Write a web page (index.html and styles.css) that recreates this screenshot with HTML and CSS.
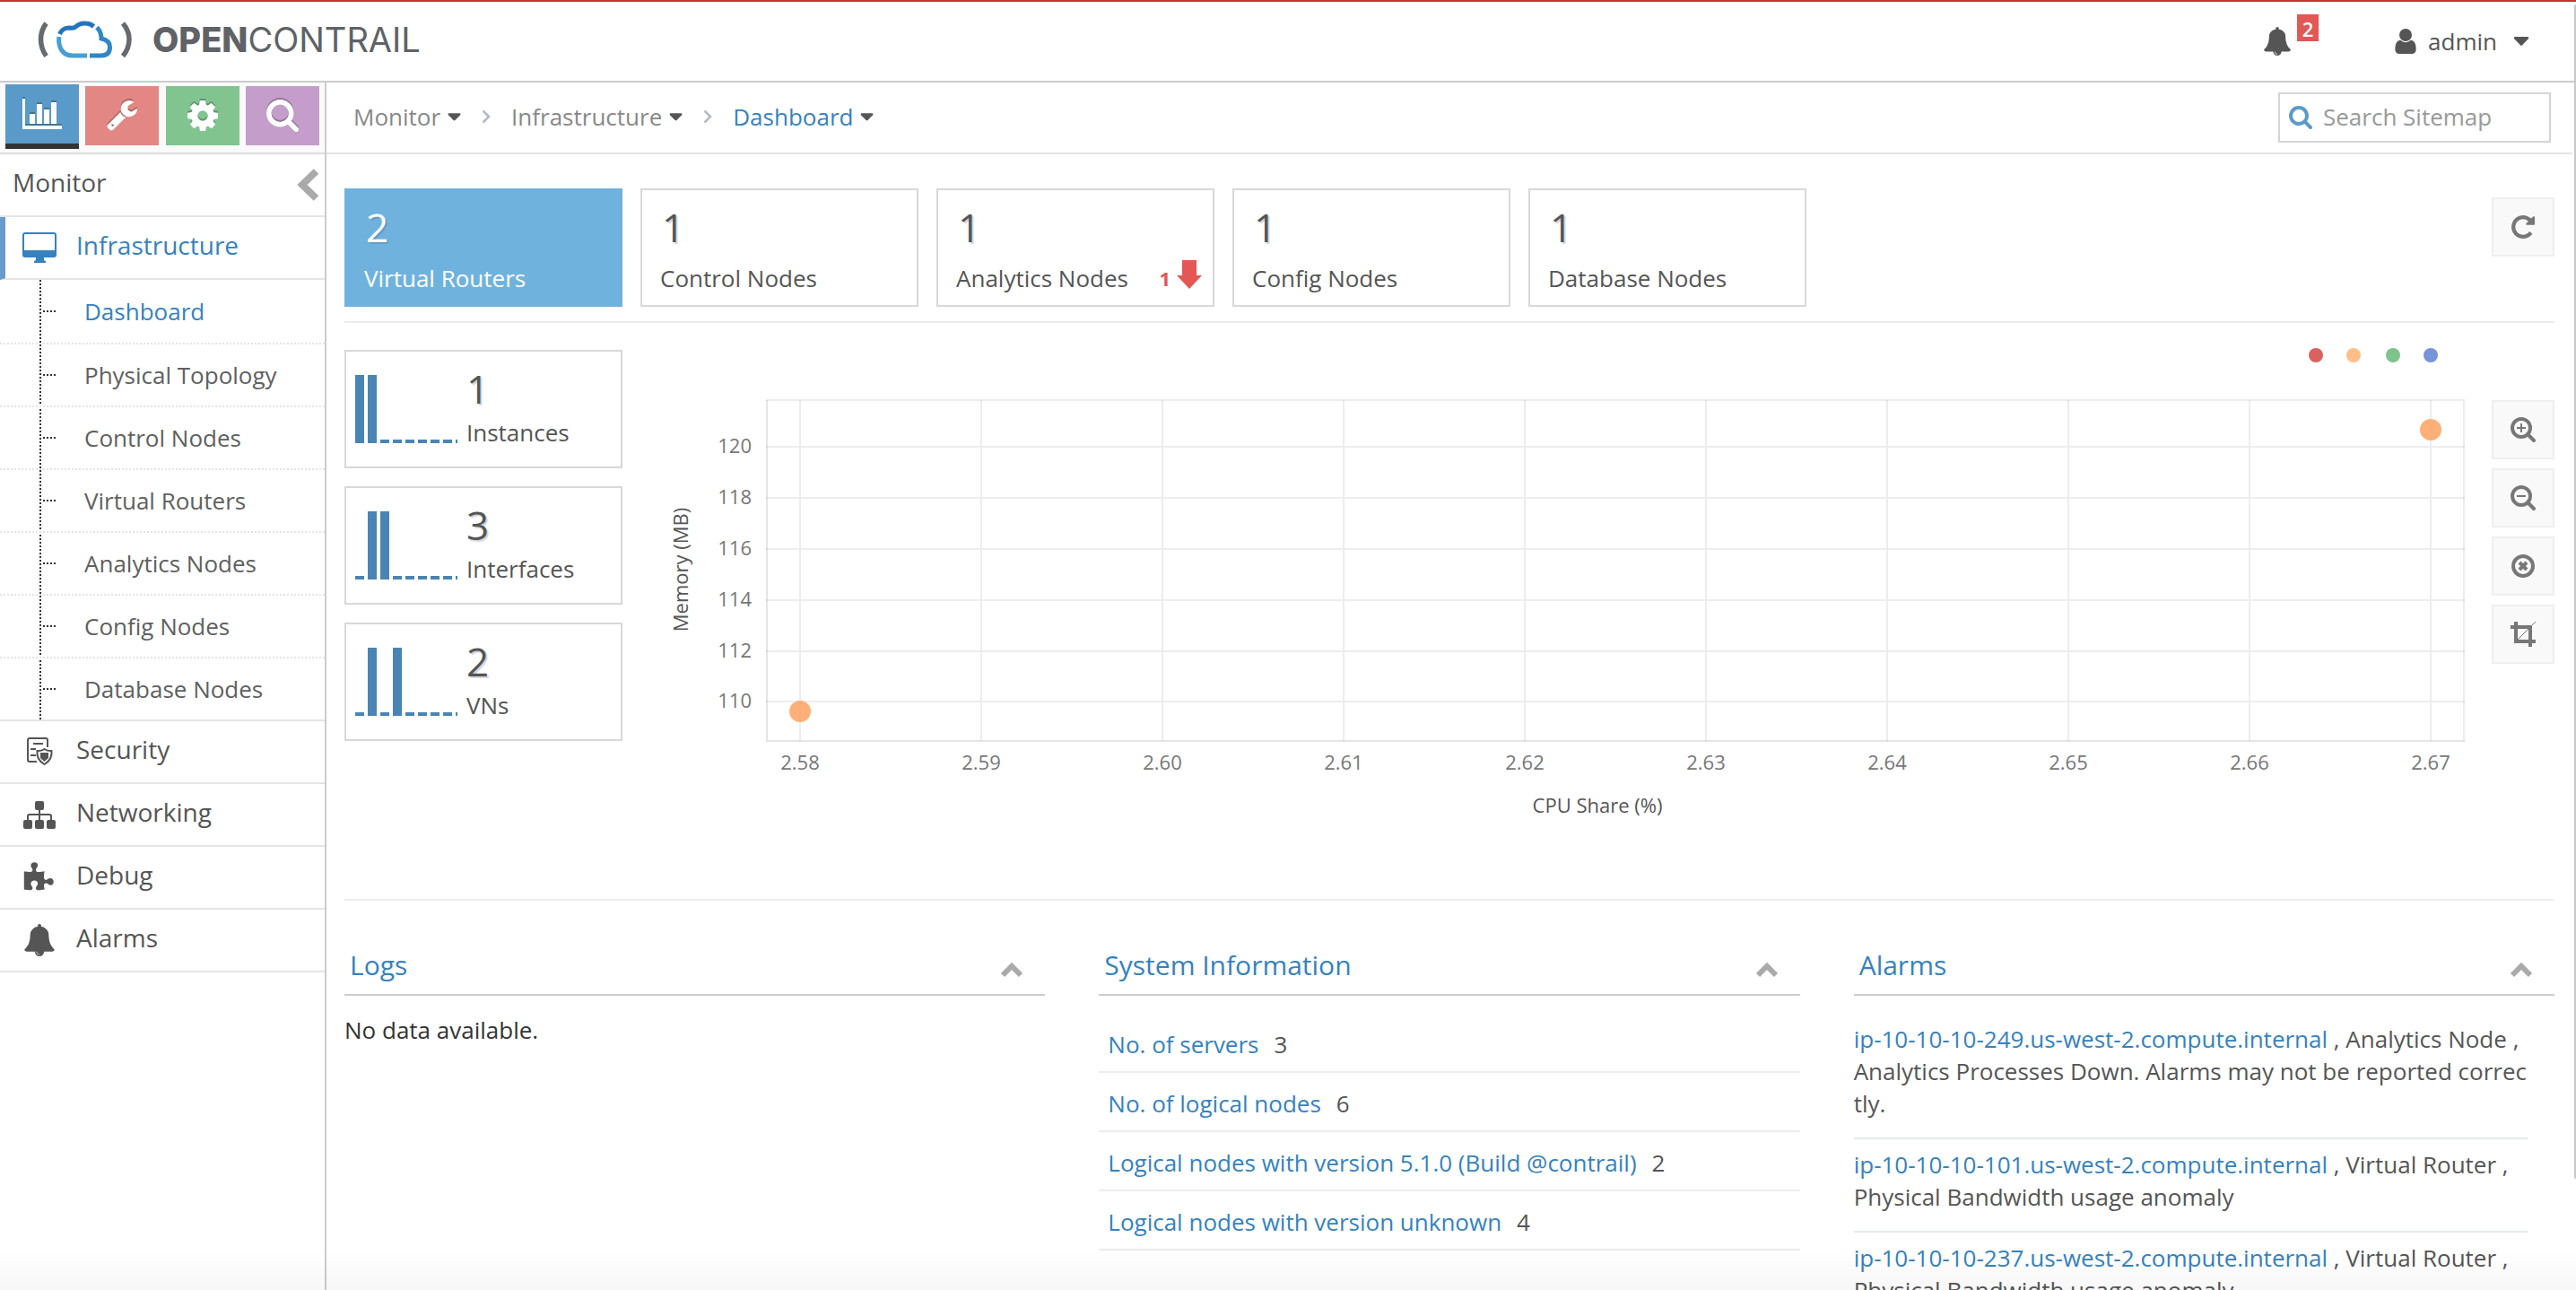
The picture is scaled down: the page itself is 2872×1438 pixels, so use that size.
FILE: index.html
```html
<!DOCTYPE html>
<html lang="en">
<head>
<meta charset="utf-8">
<title>OpenContrail - Dashboard</title>
<link rel="stylesheet" href="styles.css">
</head>
<body>
<svg class="sprite" aria-hidden="true">
  <symbol id="caret" viewBox="0 0 16 9"><path d="M1.500 0h13q1.500 0.500 0.500 2L9 8.300q-1 0.900-2 0L1 2q-1-1.500 0.500-2z"/></symbol>
  <symbol id="next" viewBox="0 0 10 16"><path d="M1.500 1.500 8 8l-6.500 6.500" fill="none" stroke="currentColor" stroke-width="2.500"/></symbol>
  <symbol id="chevron-up" viewBox="0 0 26 18"><path d="M3 15 13 5l10 10" fill="none" stroke="currentColor" stroke-width="6"/></symbol>
  <symbol id="bell" viewBox="0 0 1792 1792"><path d="M912 1696q0-16-16-16-59 0-101.500-42.500t-42.500-101.500q0-16-16-16t-16 16q0 73 51.500 124.500t124.500 51.500q16 0 16-16zm816-288q0 52-38 90t-90 38h-448q0 106-75 181t-181 75-181-75-75-181h-448q-52 0-90-38t-38-90q50-42 91-88t85-119.500 74.500-158.500 50-206 19.500-260q0-152 117-282.500t307-158.500q-8-19-8-39 0-40 28-68t68-28 68 28 28 68q0 20-8 39 190 28 307 158.500t117 282.500q0 139 19.500 260t50 206 74.500 158.500 85 119.500 91 88z"/></symbol>
  <symbol id="search" viewBox="64 128 1664 1664"><path d="M1216 832q0-185-131.500-316.500t-316.500-131.500-316.500 131.500-131.500 316.500 131.500 316.500 316.500 131.500 316.500-131.500 131.500-316.500zm512 832q0 52-38 90t-90 38q-54 0-90-38l-343-342q-179 124-399 124-143 0-273.500-55.500t-225-150-150-225-55.500-273.500 55.500-273.500 150-225 225-150 273.500-55.500 273.500 55.500 225 150 150 225 55.500 273.500q0 220-124 399l343 343q37 37 37 90z"/></symbol>
</svg>

<header class="topbar">
  <a class="brand" href="#">
    <svg class="brand-mark" viewBox="40 20 110 46" aria-hidden="true">
      <g fill="none" stroke="#666a6e" stroke-width="5.500">
        <path d="M51.500 25q-6 8-6 18t6 18.500"/><path d="M137 25q7 8 7 18t-7 18.500"/>
      </g>
      <g fill="none" stroke-width="5">
        <path stroke="#2474bd" d="M66.500 37q3-7 11-7 4 0.500 6-0.500 5-5 12-4.500 5 0 9 3.500"/>
        <path stroke="#2f86c8" d="M108 29.500q5 5 5 12.500 9.500 2 9.500 9.500 0 9.500-10 9.500H100"/>
        <path stroke="#449fd3" d="M65.800 40q-1 9 3 15 4 6 12 6H97"/>
      </g>
    </svg>
    <span class="brand-name"><b>OPEN</b>CONTRAIL</span>
  </a>
  <button class="alerts" type="button" aria-label="Alerts">
    <svg class="icon-bell"><use href="#bell"/></svg>
    <span class="badge">2</span>
  </button>
  <button class="account" type="button">
    <svg class="icon-user" viewBox="256 128 1280 1536"><path d="M1536 1399q0 109-62.500 187t-150.500 78h-854q-88 0-150.500-78t-62.500-187q0-85 8.500-160.500t31.500-152 58.500-131 94-89 134.500-34.500q131 128 313 128t313-128q76 0 134.500 34.500t94 89 58.500 131 31.500 152 8.500 160.500zm-256-887q0 159-112.500 271.500t-271.500 112.500-271.500-112.500-112.500-271.500 112.500-271.500 271.500-112.500 271.500 112.500 112.500 271.500z"/></svg>
    <span>admin</span>
    <svg class="icon-caret-lg"><use href="#caret"/></svg>
  </button>
</header>

<div class="shell">
  <aside class="sidebar">
    <div class="modes">
      <button class="mode mode-monitor active" type="button" aria-label="Monitor">
        <svg width="44" height="34" viewBox="0 0 44 34"><path d="M0 0h3v30h41v4H0zM8 17h6v11H8zM16 6h6v22h-6zM24 12h6v16h-6zM32 4h6v24h-6z"/></svg>
      </button>
      <button class="mode mode-configure" type="button" aria-label="Configure">
        <svg width="34" height="36" viewBox="64 128 1664 1664"><path d="M448 1472q0-26-19-45t-45-19-45 19-19 45 19 45 45 19 45-19 19-45zm644-420l-682 682q-37 37-90 37-52 0-91-37l-106-108q-38-36-38-90 0-53 38-91l681-681q39 98 114.500 173.500t173.500 114.500zm634-435q0 39-23 106-47 134-164.500 217.500t-258.500 83.500q-185 0-316.500-131.500t-131.500-316.500 131.500-316.500 316.500-131.500q58 0 121.500 16.500t107.500 46.500q16 11 16 28t-16 28l-293 169v224l193 107q5-3 79-48.500t135.500-81 70.500-35.500q15 0 23.500 10t8.500 25z"/></svg>
      </button>
      <button class="mode mode-settings" type="button" aria-label="Settings">
        <svg width="34" height="34" viewBox="128 128 1536 1536"><path d="M1152 896q0-106-75-181t-181-75-181 75-75 181 75 181 181 75 181-75 75-181zm512-109v222q0 12-8 23t-20 13l-185 28q-19 54-39 91 35 50 107 138 10 12 10 25t-9 23q-27 37-99 108t-94 71q-12 0-26-9l-138-108q-44 23-91 38-16 136-29 186-7 28-36 28h-222q-14 0-24.500-8.500t-11.500-21.500l-28-184q-49-16-90-37l-141 107q-10 9-25 9-14 0-25-11-126-114-165-168-7-10-7-23 0-12 8-23 15-21 51-66.500t54-70.500q-27-50-41-99l-183-27q-13-2-21-12.500t-8-23.500v-222q0-12 8-23t19-13l186-28q14-46 39-92-40-57-107-138-10-12-10-24 0-10 9-23 26-36 98.500-107.500t94.500-71.500q13 0 26 10l138 107q44-23 91-38 16-136 29-186 7-28 36-28h222q14 0 24.500 8.500t11.500 21.500l28 184q49 16 90 37l142-107q9-9 24-9 13 0 25 10 129 119 165 170 7 8 7 22 0 12-8 23-15 21-51 66.500t-54 70.500q26 50 41 98l183 28q13 2 21 12.500t8 23.500z"/></svg>
      </button>
      <button class="mode mode-query" type="button" aria-label="Query">
        <svg width="36" height="36"><use href="#search"/></svg>
      </button>
    </div>
    <div class="side-title">
      <h1 class="side-label">Monitor</h1>
      <button class="collapse" type="button" aria-label="Collapse menu">
        <svg width="24" height="36" viewBox="0 0 24 36"><path d="M20.500 3 5 18l15.500 15" fill="none" stroke="#aaa" stroke-width="8"/></svg>
      </button>
    </div>
    <nav>
      <a class="side-item current" href="#">
        <svg class="side-icon" viewBox="0 0 38 34"><path fill-rule="evenodd" d="M3 0h32q3 0 3 3v22q0 3-3 3H24v2q0 2 2 2v2H13v-2q2 0 2-2v-2H3q-3 0-3-3V3q0-3 3-3zm0 2Q2 2 2 3v17h34V3q0-1-1-1z"/></svg>
        <span class="side-label">Infrastructure</span>
      </a>
      <ul class="submenu">
        <li><a class="current" href="#">Dashboard</a></li>
        <li><a href="#">Physical Topology</a></li>
        <li><a href="#">Control Nodes</a></li>
        <li><a href="#">Virtual Routers</a></li>
        <li><a href="#">Analytics Nodes</a></li>
        <li><a href="#">Config Nodes</a></li>
        <li><a href="#">Database Nodes</a></li>
      </ul>
      <a class="side-item" href="#">
        <svg class="side-icon" viewBox="0 0 38 36"><g fill="none" stroke="currentColor" stroke-width="2"><path d="M28 13V5q0-2-2-2H8Q6 3 6 5v22q0 2 2 2h8M12 9h11M9 15h6M9 22h6"/><path d="M24.500 15q4 2.500 8 2 1 10-8 15-9-5-8-15 4 0.500 8-2z"/></g><path d="M20 19h9v6l-4.500 4-4.500-4z"/></svg>
        <span class="side-label">Security</span>
      </a>
      <a class="side-item" href="#">
        <svg class="side-icon" viewBox="0 0 38 36"><g><rect x="14" y="3" width="10" height="10" rx="2"/><rect x="1" y="24" width="10" height="10" rx="2"/><rect x="14" y="24" width="10" height="10" rx="2"/><rect x="27" y="24" width="10" height="10" rx="2"/></g><path d="M19 12v13M6 25v-5.500q0-1.500 1.500-1.500h23q1.500 0 1.500 1.500V25" fill="none" stroke="currentColor" stroke-width="2"/></svg>
        <span class="side-label">Networking</span>
      </a>
      <a class="side-item" href="#">
        <svg class="side-icon" viewBox="0 -64 1920 1792"><path d="M1755 1083q0 81-44.500 135t-123.500 54q-41 0-77.500-17.500t-59-38-56.500-38-71-17.500q-110 0-110 124 0 39 16 115t15 115v5q-22 0-33 1-34 3-97.500 11.500t-115.500 13.500-98 5q-61 0-103-26.500t-42-83.500q0-37 17.500-71t38-56.500 38-59 17.500-77.500q0-79-54-123.500t-135-44.500q-84 0-143 45.500t-59 127.500q0 43 15 83t33.500 64.500 33.500 53 15 50.500q0 45-46 89-37 35-117 35-95 0-245-24-9-2-27.500-4t-27.500-4l-13-2q-1 0-3-1-2 0-2-1v-1024q2 1 17.500 3.500t34 5 21.500 3.500q150 24 245 24 80 0 117-35 46-44 46-89 0-22-15-50.500t-33.500-53-33.500-64.500-15-83q0-82 59-127.500t144-45.500q80 0 134 44.500t54 123.500q0 41-17.500 77.500t-38 59-38 56.500-17.500 71q0 57 42 83.500t103 26.500q64 0 180-15t163-17v2q-1 2-3.500 17.500t-5 34-3.500 21.500q-24 150-24 245 0 80 35 117 44 46 89 46 22 0 50.500-15t53-33.500 64.500-33.500 83-15q82 0 127.500 59t45.500 143z"/></svg>
        <span class="side-label">Debug</span>
      </a>
      <a class="side-item" href="#">
        <svg class="side-icon"><use href="#bell"/></svg>
        <span class="side-label">Alarms</span>
      </a>
    </nav>
  </aside>

  <main class="content">
    <div class="crumbbar">
      <nav class="crumbs" aria-label="Breadcrumb">
        <a href="#">Monitor <svg class="icon-caret"><use href="#caret"/></svg></a>
        <svg class="icon-next"><use href="#next"/></svg>
        <a href="#">Infrastructure <svg class="icon-caret"><use href="#caret"/></svg></a>
        <svg class="icon-next"><use href="#next"/></svg>
        <a class="current" href="#">Dashboard <svg class="icon-caret"><use href="#caret"/></svg></a>
      </nav>
      <label class="sitemap">
        <svg class="icon-search"><use href="#search"/></svg>
        <input type="search" placeholder="Search Sitemap" aria-label="Search Sitemap">
      </label>
    </div>

    <div class="page">
      <section class="summary">
        <button class="tile selected" type="button"><span class="count">2</span><span class="tile-label">Virtual Routers</span></button>
        <button class="tile" type="button"><span class="count">1</span><span class="tile-label">Control Nodes</span></button>
        <button class="tile" type="button"><span class="count">1</span><span class="tile-label">Analytics Nodes
          <span class="down"><b>1</b><svg width="28" height="32" viewBox="0 0 28 32"><path d="M6 0h16v17h6L14 32 0 17h6z"/></svg></span></span></button>
        <button class="tile" type="button"><span class="count">1</span><span class="tile-label">Config Nodes</span></button>
        <button class="tile" type="button"><span class="count">1</span><span class="tile-label">Database Nodes</span></button>
        <button class="tool refresh" type="button" aria-label="Refresh">
          <svg width="26" height="26" viewBox="128 128 1536 1536"><path d="M1664 256v448q0 26-19 45t-45 19h-448q-42 0-59-40-17-39 14-69l138-138q-148-137-349-137-104 0-198.500 40.500t-163.500 109.500-109.500 163.500-40.500 198.500 40.500 198.500 109.500 163.500 163.500 109.500 198.500 40.500q119 0 225-52t179-147q7-10 23-12 15 0 25 9l137 138q9 8 9.500 20.500t-7.500 22.500q-109 132-264 204.500t-327 72.500q-156 0-298-61t-245-164-164-245-61-298 61-298 164-245 245-164 298-61q147 0 284.500 55.500t244.500 156.500l130-129q29-31 70-14 39 17 39 59z"/></svg>
        </button>
      </section>

      <section class="overview">
        <div class="stats">
          <div class="stat">
            <svg class="spark" viewBox="0 0 114 76"><path d="M0 0h10v76H0zM14 0h10v76H14zM28 72h10v4H28zM42 72h10v4H42zM56 72h10v4H56zM70 72h10v4H70zM84 72h10v4H84zM98 72h10v4H98zM112 72h2v4h-2z"/></svg>
            <div><div class="count">1</div><div class="stat-label">Instances</div></div>
          </div>
          <div class="stat">
            <svg class="spark" viewBox="0 0 114 76"><path d="M0 72h10v4H0zM14 0h10v76H14zM28 0h10v76H28zM42 72h10v4H42zM56 72h10v4H56zM70 72h10v4H70zM84 72h10v4H84zM98 72h10v4H98zM112 72h2v4h-2z"/></svg>
            <div><div class="count">3</div><div class="stat-label">Interfaces</div></div>
          </div>
          <div class="stat">
            <svg class="spark" viewBox="0 0 114 76"><path d="M0 72h10v4H0zM14 0h10v76H14zM28 72h10v4H28zM42 0h10v76H42zM56 72h10v4H56zM70 72h10v4H70zM84 72h10v4H84zM98 72h10v4H98zM112 72h2v4h-2z"/></svg>
            <div><div class="count">2</div><div class="stat-label">VNs</div></div>
          </div>
        </div>

        <svg class="chart" viewBox="0 0 2024 560" role="img" aria-label="Memory against CPU share for each virtual router">
          <g>
            <circle cx="1858" cy="16" r="8" fill="#d9625f"/><circle cx="1900" cy="16" r="8" fill="#ffbf87"/>
            <circle cx="1944" cy="16" r="8" fill="#7ec48a"/><circle cx="1986" cy="16" r="8" fill="#7793da"/>
          </g>
          <path class="grid" d="M130 118h1894M130 175h1894M130 232h1894M130 289h1894M130 346h1894M130 402h1894M168 66v380M370 66v380M572 66v380M774 66v380M976 66v380M1178 66v380M1380 66v380M1582 66v380M1784 66v380M1986 66v380"/>
          <path class="grid" d="M130 66h1893v380"/>
          <path class="axis" d="M131 66v380h1893"/>
          <g class="ticks-y">
            <text x="114" y="125">120</text><text x="114" y="182">118</text><text x="114" y="239">116</text>
            <text x="114" y="296">114</text><text x="114" y="353">112</text><text x="114" y="409">110</text>
          </g>
          <g class="ticks-x">
            <text x="168" y="478">2.58</text><text x="370" y="478">2.59</text><text x="572" y="478">2.60</text>
            <text x="774" y="478">2.61</text><text x="976" y="478">2.62</text><text x="1178" y="478">2.63</text>
            <text x="1380" y="478">2.64</text><text x="1582" y="478">2.65</text><text x="1784" y="478">2.66</text>
            <text x="1986" y="478">2.67</text>
          </g>
          <text class="axis-title" x="1057" y="526">CPU Share (%)</text>
          <text class="axis-title" transform="translate(43 255) rotate(-90)">Memory (MB)</text>
          <circle class="point" cx="168" cy="413" r="12"/><circle class="point" cx="1986" cy="99" r="12"/>
        </svg>

        <div class="tools">
          <button class="tool" type="button" aria-label="Zoom in"><svg width="28" height="28" viewBox="0 0 28 28"><g fill="none" stroke="currentColor"><circle cx="12" cy="12" r="10" stroke-width="4"/><path d="m19 19 7 7" stroke-width="4" stroke-linecap="round"/><path d="M7 12h10M12 7v10" stroke-width="2"/></g></svg></button>
          <button class="tool" type="button" aria-label="Zoom out"><svg width="28" height="28" viewBox="0 0 28 28"><g fill="none" stroke="currentColor"><circle cx="12" cy="12" r="10" stroke-width="4"/><path d="m19 19 7 7" stroke-width="4" stroke-linecap="round"/><path d="M7 12h10" stroke-width="2"/></g></svg></button>
          <button class="tool" type="button" aria-label="Reset zoom"><svg width="26" height="26" viewBox="0 0 26 26"><g fill="none" stroke="currentColor" stroke-width="4"><circle cx="13" cy="13" r="11"/><path d="m9 9 8 8m0-8-8 8"/></g></svg></button>
          <button class="tool" type="button" aria-label="Crop"><svg width="28" height="28" viewBox="0 0 28 28"><g fill="none" stroke="currentColor" stroke-width="4"><path d="M0 6h22v22M6 0v22h22"/><path d="M8 20 28 0" stroke-width="1"/></g></svg></button>
        </div>
      </section>

      <section class="panels">
        <article>
          <header class="panel-head"><h2>Logs</h2><button type="button" aria-label="Collapse Logs"><svg><use href="#chevron-up"/></svg></button></header>
          <p class="empty">No data available.</p>
        </article>
        <article>
          <header class="panel-head"><h2>System Information</h2><button type="button" aria-label="Collapse System Information"><svg><use href="#chevron-up"/></svg></button></header>
          <ul class="facts">
            <li><a href="#">No. of servers</a><span>3</span></li>
            <li><a href="#">No. of logical nodes</a><span>6</span></li>
            <li><a href="#">Logical nodes with version 5.1.0 (Build @contrail)</a><span>2</span></li>
            <li><a href="#">Logical nodes with version unknown</a><span>4</span></li>
          </ul>
        </article>
        <article>
          <header class="panel-head"><h2>Alarms</h2><button type="button" aria-label="Collapse Alarms"><svg><use href="#chevron-up"/></svg></button></header>
          <ul class="alarms">
            <li><a href="#">ip-10-10-10-249.us-west-2.compute.internal</a> , Analytics Node ,<br><span class="detail">Analytics Processes Down. Alarms may not be reported correctly.</span></li>
            <li><a href="#">ip-10-10-10-101.us-west-2.compute.internal</a> , Virtual Router ,<br><span class="detail">Physical Bandwidth usage anomaly</span></li>
            <li><a href="#">ip-10-10-10-237.us-west-2.compute.internal</a> , Virtual Router ,<br><span class="detail">Physical Bandwidth usage anomaly</span></li>
          </ul>
        </article>
      </section>
    </div>
  </main>
</div>
<div class="fade"></div>
<div class="scroll-thumb"></div>
</body>
</html>
```
FILE: styles.css
```css
* { box-sizing: border-box; }

body {
  display: flex;
  flex-direction: column;
  height: 100vh;
  margin: 0;
  padding-right: 4px;
  overflow: hidden;
  background: #fff;
  color: #555;
  font: 26px/36px "Open Sans", "Noto Sans", sans-serif;
}

a { color: inherit; text-decoration: none; }
ul { margin: 0; padding: 0; list-style: none; }
h1, h2, p { margin: 0; font-weight: 400; }
button { padding: 0; border: 0; background: none; color: inherit; font: inherit; text-align: left; }
svg { display: block; flex: none; fill: currentColor; }
.sprite { position: absolute; width: 0; height: 0; }

/* Top bar */
.topbar {
  display: flex;
  flex: none;
  align-items: center;
  height: 92px;
  margin-right: -4px;
  padding: 0 52px 0 40px;
  border-top: 2px solid #cf2f30;
  border-bottom: 2px solid #ccc;
}
.brand { display: flex; align-items: center; gap: 20px; margin-right: auto; padding-bottom: 4px; }
.brand-mark { width: 110px; height: 46px; }
.brand-name { color: #5f6266; font: 400 38px/44px Inter, sans-serif; }
.brand-name b { font-weight: 800; }
.alerts { display: flex; align-items: center; gap: 6px; margin-right: 84px; }
.icon-bell { width: 32px; height: 32px; }
.badge {
  width: 24px;
  height: 30px;
  margin-bottom: 30px;
  background: #e35754;
  color: #fff;
  font: 600 22px/32px "Open Sans", sans-serif;
  text-align: center;
}
.account { display: flex; align-items: center; }
.icon-user { width: 26px; height: 28px; margin-right: 12px; }
.icon-caret-lg { width: 18px; height: 10px; margin-left: 18px; }

/* Sidebar */
.shell { display: grid; flex: 1; grid-template-columns: 364px 1fr; min-height: 0; }
.sidebar { border-right: 2px solid #ccc; }
.modes {
  display: grid;
  grid-template-columns: repeat(4, 82px);
  justify-content: space-between;
  align-items: start;
  height: 80px;
  padding: 4px 6px;
  border-bottom: 2px solid #ddd;
  background: #fafafa;
}
.mode { display: flex; align-items: center; justify-content: center; height: 66px; color: #fff; }
.mode.active { height: 72px; margin-top: -2px; border-bottom: 6px solid #333; }
.mode svg { filter: drop-shadow(0 -2px 0 rgba(0, 0, 0, .25)); }
.mode-monitor { background: #5a9ac8; }
.mode-configure { background: #e28783; }
.mode-settings { background: #81c48f; }
.mode-query { background: #c59dcb; }

.side-title, .side-item { display: flex; align-items: center; height: 70px; border-bottom: 2px solid #e4e4e4; }
.side-title { justify-content: space-between; padding: 0 6px 0 14px; }
.side-label { padding-bottom: 6px; font-size: 28px; line-height: 38px; }
.side-item { gap: 22px; padding-left: 25px; }
.side-item.current { padding-left: 19px; border-left: 6px solid #669bcb; }
.side-icon { width: 38px; height: 36px; }
.current, .crumbs .current { color: #3582bf; }

.submenu { border-bottom: 2px solid #e4e4e4; background: repeating-linear-gradient(#333 0 2px, #fff 2px 4px) 44px 0 / 2px 100% no-repeat; }
.submenu li { display: flex; align-items: center; height: 70px; border-bottom: 2px dotted #e4e4e4; }
.submenu li:first-child { height: 72px; }
.submenu li:last-child { height: 68px; border-bottom: 0; }
.submenu li::before { width: 14px; margin: 0 32px 0 48px; border-top: 2px dotted #333; content: ""; }
.submenu a { color: #606060; }
.submenu .current { color: #3582bf; }

/* Breadcrumb bar */
.crumbbar {
  display: flex;
  align-items: center;
  justify-content: space-between;
  height: 80px;
  padding: 0 24px 0 30px;
  border-bottom: 2px solid #e4e4e4;
}
.crumbs { display: flex; align-items: center; gap: 23px; padding-bottom: 2px; color: #888; }
.crumbs a { display: flex; align-items: center; gap: 8px; }
.icon-caret { width: 15px; height: 9px; color: #555; }
.icon-next { width: 10px; height: 16px; color: #b4b9c4; }
.sitemap { display: flex; align-items: center; gap: 12px; width: 304px; height: 56px; padding: 0 10px; border: 2px solid #d4d4d4; }
.icon-search { width: 26px; height: 26px; color: #5a9bc9; }
.sitemap input { flex: 1; min-width: 0; padding: 0 0 2px; border: 0; outline: 0; background: none; color: #555; font: inherit; }
.sitemap input::placeholder { color: #999; opacity: 1; }

/* Summary tiles */
.content { min-width: 0; }
.page { padding: 0 20px; }
.summary { display: flex; gap: 20px; padding: 38px 0 16px; border-bottom: 2px solid #ededed; }
.tile { display: flex; flex-direction: column; gap: 9px; width: 310px; height: 132px; padding: 11px 12px 0 20px; border: 2px solid #d8d8d8; }
.tile.selected { border-color: #70b2de; background: #70b2de; color: #fff; }
.count { font-size: 44px; line-height: 60px; text-shadow: 2px 2px 0 rgba(60, 80, 110, .22); }
.tile .count { padding-left: 2px; }
.tile-label { display: flex; justify-content: space-between; width: 100%; }
.down { display: flex; gap: 7px; color: #e35754; font-size: 22px; }
.down svg { margin-top: -2px; }
.tool { display: grid; place-items: center; width: 70px; height: 66px; border: 2px solid #efefef; background: #f9f9f9; color: #777; }
.refresh { margin: 10px 0 0 auto; }

/* Overview */
.overview { display: grid; grid-template-columns: 310px 1fr 70px; gap: 30px; padding: 20px 0 62px; border-bottom: 2px solid #ededed; }
.stats { display: flex; flex-direction: column; gap: 20px; padding-top: 10px; }
.stat { display: flex; gap: 10px; height: 132px; padding: 11px 10px; border: 2px solid #d8d8d8; }
.stat-label { margin-top: 1px; }
.spark { width: 114px; height: 76px; margin-top: 15px; color: #4a84b4; }
.chart { width: 100%; height: auto; }
.grid, .axis { fill: none; stroke: #000; stroke-opacity: .07; stroke-width: 2; }
.axis { stroke-opacity: .1; }
.chart text { font-size: 22px; }
.ticks-y { fill: #777; text-anchor: end; }
.ticks-x { fill: #777; text-anchor: middle; }
.axis-title { fill: #555; text-anchor: middle; }
.point { fill: #ff9f5b; fill-opacity: .82; }
.tools { display: flex; flex-direction: column; gap: 10px; padding-top: 66px; }

/* Panels */
.panels { display: grid; grid-template-columns: repeat(3, 1fr); gap: 60px; padding-top: 52px; }
.panel-head { display: flex; align-items: center; justify-content: space-between; padding: 0 24px 12px 6px; border-bottom: 2px solid #ccc; }
.panel-head h2 { color: #3582bf; font-size: 30px; line-height: 40px; }
.panel-head svg { width: 26px; height: 18px; margin-top: 10px; color: #aaa; }
.empty { padding-top: 20px; color: #333; }
.facts { padding-top: 20px; }
.facts li { display: flex; gap: 17px; padding: 16px 10px 12px; border-bottom: 2px solid #ececec; }
.facts a, .alarms a { color: #3582bf; }
.alarms { padding: 20px 30px 0 0; }
.alarms li { padding: 10px 0 20px; border-bottom: 2px solid #e2eaf1; }
.detail { word-break: break-all; }

.fade { position: fixed; right: 0; bottom: 0; left: 0; height: 46px; background: linear-gradient(rgba(0, 0, 0, 0), rgba(0, 0, 0, .03)); pointer-events: none; }
.scroll-thumb { position: fixed; top: 5px; right: 0; width: 2px; height: 91vh; border-radius: 2px 0 0 2px; background: #c8c8c8; }
```
